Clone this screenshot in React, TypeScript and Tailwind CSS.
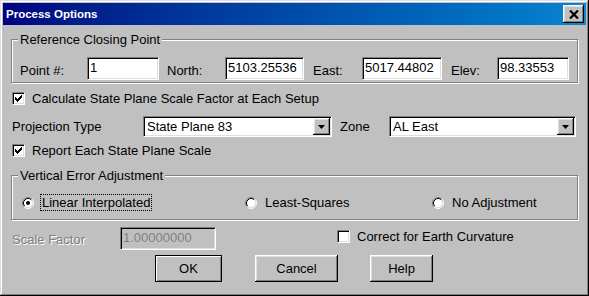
import React from 'react';

const sunken =
  'border border-t-[#808080] border-l-[#808080] border-b-white border-r-white shadow-[inset_1px_1px_0_#000,inset_-1px_-1px_0_#dfdfdf]';
const raised =
  'shadow-[inset_-1px_-1px_0_#000,inset_1px_1px_0_#fff,inset_-2px_-2px_0_#808080,inset_2px_2px_0_#dfdfdf]';

function Check({ checked }: { checked: boolean }) {
  // classic 7px tick, one 3px column per x
  const cols = [5, 6, 7, 6, 5, 4, 3];
  return (
    <div className={`w-[13px] h-[13px] bg-white shrink-0 ${sunken}`}>
      {checked && (
        <svg width="11" height="11" viewBox="1 1 11 11" shapeRendering="crispEdges">
          {cols.map((y, i) => (
            <rect key={i} x={3 + i} y={y} width="1" height="3" fill="#000" />
          ))}
        </svg>
      )}
    </div>
  );
}

function Radio({ checked }: { checked: boolean }) {
  return (
    <svg width="12" height="12" viewBox="0 0 12 12" className="shrink-0">
      <circle cx="6" cy="6" r="4.5" fill="#fff" />
      <path d="M2.11 9.89 A5.5 5.5 0 0 1 9.89 2.11" stroke="#808080" fill="none" />
      <path d="M9.89 2.11 A5.5 5.5 0 0 1 2.11 9.89" stroke="#fff" fill="none" />
      <path d="M2.82 9.18 A4.5 4.5 0 0 1 9.18 2.82" stroke="#000" fill="none" />
      <path d="M9.18 2.82 A4.5 4.5 0 0 1 2.82 9.18" stroke="#dfdfdf" fill="none" />
      {checked && <circle cx="6" cy="6" r="2" fill="#000" />}
    </svg>
  );
}

function Field({ value, width }: { value: string; width: string }) {
  return (
    <div className={`${width} h-[23px] bg-white flex items-center pl-[2px] pb-[2px] shrink-0 ${sunken}`}>
      {value}
    </div>
  );
}

function Combo({ value, width }: { value: string; width: string }) {
  return (
    <div className={`${width} h-[21px] bg-white flex p-px shrink-0 ${sunken}`}>
      <div className="flex-1 flex items-center pl-[2px]">{value}</div>
      <div className={`w-[17px] h-[17px] bg-[#c0c0c0] flex items-center justify-center ${raised}`}>
        <svg width="7" height="4" viewBox="0 0 7 4">
          <polygon points="0,0 7,0 3.5,4" fill="#000" />
        </svg>
      </div>
    </div>
  );
}

function Group({ title, className, children }: { title: string; className: string; children: React.ReactNode }) {
  return (
    <fieldset
      className={`m-0 min-w-0 border border-[#808080] shadow-[1px_1px_0_#fff,inset_1px_1px_0_#fff] px-2 ${className}`}
    >
      <legend className="ml-[-2px] px-[2px] bg-[#c0c0c0] leading-[15px]">{title}</legend>
      {children}
    </fieldset>
  );
}

export default function App() {
  return (
    <div
      className="w-[589px] h-[296px] bg-[#c0c0c0] p-[3px] flex flex-col text-[13px] leading-[15px] text-black shadow-[inset_-1px_-1px_0_#000,inset_1px_1px_0_#dfdfdf,inset_-2px_-2px_0_#808080,inset_2px_2px_0_#fff]"
      style={{ fontFamily: '"Liberation Sans", Arial, sans-serif' }}
    >
      {/* title bar */}
      <div className="h-[22px] shrink-0 flex items-center justify-between pl-[3px] pr-[2px] bg-linear-to-r from-[#000080] to-[#1084d0]">
        <span className="text-white font-bold text-[11.5px]">Process Options</span>
        <div className={`w-[21px] h-[18px] bg-[#c0c0c0] flex items-center justify-center ${raised}`}>
          <svg width="10" height="9" viewBox="0 0 10 9">
            <path d="M1 0.5 L9 8.5 M9 0.5 L1 8.5" stroke="#000" strokeWidth="2.2" />
          </svg>
        </div>
      </div>

      <div className="flex flex-col px-2">
        <Group title="Reference Closing Point" className="mt-[7px] pb-[2px]">
          <div className="flex items-center mt-[10px] h-[23px]">
            <span className="w-[67px] pt-[3px]">Point #:</span>
            <Field value="1" width="w-[72px]" />
            <span className="ml-[8px] w-[58px] pt-[3px]">North:</span>
            <Field value="5103.25536" width="w-[79px]" />
            <span className="ml-[9px] w-[49px] pt-[3px]">East:</span>
            <Field value="5017.44802" width="w-[80px]" />
            <span className="ml-[9px] w-[46px] pt-[3px]">Elev:</span>
            <Field value="98.33553" width="w-[72px]" />
          </div>
        </Group>

        <div className="flex items-center gap-[7px] ml-px mt-[9px] h-[13px]">
          <Check checked />
          <span>Calculate State Plane Scale Factor at Each Setup</span>
        </div>

        <div className="flex items-center ml-px mt-[11px] h-[21px]">
          <span className="w-[131px]">Projection Type</span>
          <Combo value="State Plane 83" width="w-[189px]" />
          <span className="ml-[8px] w-[49px]">Zone</span>
          <Combo value="AL East" width="w-[187px]" />
        </div>

        <div className="flex items-center gap-[7px] ml-px mt-[7px] h-[13px]">
          <Check checked />
          <span>Report Each State Plane Scale</span>
        </div>

        <Group title="Vertical Error Adjustment" className="mt-[11px] pb-[7px]">
          <div className="flex items-center mt-[10px] h-[19px] pl-[2px]">
            <div className="w-[223px] flex items-center">
              <Radio checked />
              <span className="ml-[6px] px-px border border-dotted border-black">Linear Interpolated</span>
            </div>
            <div className="w-[187px] flex items-center">
              <Radio checked={false} />
              <span className="ml-[6px] px-px border border-transparent">Least-Squares</span>
            </div>
            <div className="flex items-center">
              <Radio checked={false} />
              <span className="ml-[6px] px-px border border-transparent">No Adjustment</span>
            </div>
          </div>
        </Group>

        <div className="flex items-center ml-px mt-[7px] h-[23px]">
          <span className="w-[108px] pt-[2px] text-[#808080] [text-shadow:1px_1px_0_#fff]">Scale Factor</span>
          <div className={`w-[96px] h-[23px] bg-[#c0c0c0] text-[#808080] flex items-center pl-[2px] pb-[2px] ${sunken}`}>
            1.00000000
          </div>
          <div className="flex items-center gap-[7px] ml-[121px] self-start mt-[2px]">
            <Check checked={false} />
            <span>Correct for Earth Curvature</span>
          </div>
        </div>

        <div className="flex mt-[5px] h-[27px]">
          <button className="ml-[144px] w-[67px] h-[27px] bg-[#c0c0c0] border border-black shadow-[inset_1px_1px_0_#fff,inset_-1px_-1px_0_#808080]">
            OK
          </button>
          <button className={`ml-[33px] w-[83px] h-[27px] bg-[#c0c0c0] ${raised}`}>Cancel</button>
          <button className={`ml-[32px] w-[63px] h-[27px] bg-[#c0c0c0] ${raised}`}>Help</button>
        </div>
      </div>
    </div>
  );
}
